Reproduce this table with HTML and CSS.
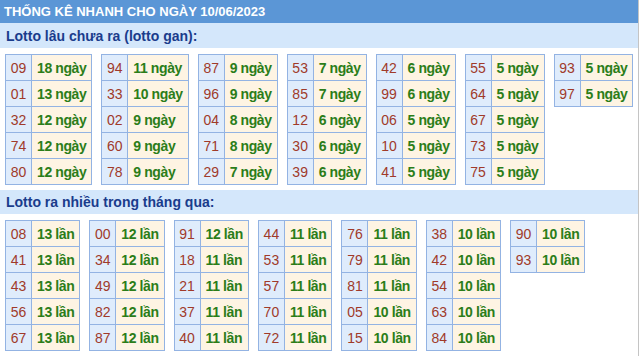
FILE: index.html
```html
<!DOCTYPE html>
<html lang="vi">
<head>
<meta charset="utf-8">
<title>Thống kê nhanh</title>
<link rel="stylesheet" href="styles.css">
</head>
<body>
<div class="box">
  <div class="head">THỐNG KÊ NHANH CHO NGÀY 10/06/2023</div>
  <div class="bar">Lotto lâu chưa ra (lotto gan):</div>
  <div class="tables">
    <table><tr><td class="n">09</td><td class="v">18 ngày</td></tr><tr><td class="n">01</td><td class="v">13 ngày</td></tr><tr><td class="n">32</td><td class="v">12 ngày</td></tr><tr><td class="n">74</td><td class="v">12 ngày</td></tr><tr><td class="n">80</td><td class="v">12 ngày</td></tr></table>
    <table><tr><td class="n">94</td><td class="v">11 ngày</td></tr><tr><td class="n">33</td><td class="v">10 ngày</td></tr><tr><td class="n">02</td><td class="v">9 ngày</td></tr><tr><td class="n">60</td><td class="v">9 ngày</td></tr><tr><td class="n">78</td><td class="v">9 ngày</td></tr></table>
    <table><tr><td class="n">87</td><td class="v">9 ngày</td></tr><tr><td class="n">96</td><td class="v">9 ngày</td></tr><tr><td class="n">04</td><td class="v">8 ngày</td></tr><tr><td class="n">71</td><td class="v">8 ngày</td></tr><tr><td class="n">29</td><td class="v">7 ngày</td></tr></table>
    <table><tr><td class="n">53</td><td class="v">7 ngày</td></tr><tr><td class="n">85</td><td class="v">7 ngày</td></tr><tr><td class="n">12</td><td class="v">6 ngày</td></tr><tr><td class="n">30</td><td class="v">6 ngày</td></tr><tr><td class="n">39</td><td class="v">6 ngày</td></tr></table>
    <table><tr><td class="n">42</td><td class="v">6 ngày</td></tr><tr><td class="n">99</td><td class="v">6 ngày</td></tr><tr><td class="n">06</td><td class="v">5 ngày</td></tr><tr><td class="n">10</td><td class="v">5 ngày</td></tr><tr><td class="n">41</td><td class="v">5 ngày</td></tr></table>
    <table><tr><td class="n">55</td><td class="v">5 ngày</td></tr><tr><td class="n">64</td><td class="v">5 ngày</td></tr><tr><td class="n">67</td><td class="v">5 ngày</td></tr><tr><td class="n">73</td><td class="v">5 ngày</td></tr><tr><td class="n">75</td><td class="v">5 ngày</td></tr></table>
    <table><tr><td class="n">93</td><td class="v">5 ngày</td></tr><tr><td class="n">97</td><td class="v">5 ngày</td></tr></table>
  </div>
  <div class="bar bar2">Lotto ra nhiều trong tháng qua:</div>
  <div class="tables">
    <table><tr><td class="n">08</td><td class="v">13 lần</td></tr><tr><td class="n">41</td><td class="v">13 lần</td></tr><tr><td class="n">43</td><td class="v">13 lần</td></tr><tr><td class="n">56</td><td class="v">13 lần</td></tr><tr><td class="n">67</td><td class="v">13 lần</td></tr></table>
    <table><tr><td class="n">00</td><td class="v">12 lần</td></tr><tr><td class="n">34</td><td class="v">12 lần</td></tr><tr><td class="n">49</td><td class="v">12 lần</td></tr><tr><td class="n">82</td><td class="v">12 lần</td></tr><tr><td class="n">87</td><td class="v">12 lần</td></tr></table>
    <table><tr><td class="n">91</td><td class="v">12 lần</td></tr><tr><td class="n">18</td><td class="v">11 lần</td></tr><tr><td class="n">21</td><td class="v">11 lần</td></tr><tr><td class="n">37</td><td class="v">11 lần</td></tr><tr><td class="n">40</td><td class="v">11 lần</td></tr></table>
    <table><tr><td class="n">44</td><td class="v">11 lần</td></tr><tr><td class="n">53</td><td class="v">11 lần</td></tr><tr><td class="n">57</td><td class="v">11 lần</td></tr><tr><td class="n">70</td><td class="v">11 lần</td></tr><tr><td class="n">72</td><td class="v">11 lần</td></tr></table>
    <table><tr><td class="n">76</td><td class="v">11 lần</td></tr><tr><td class="n">79</td><td class="v">11 lần</td></tr><tr><td class="n">81</td><td class="v">11 lần</td></tr><tr><td class="n">05</td><td class="v">10 lần</td></tr><tr><td class="n">15</td><td class="v">10 lần</td></tr></table>
    <table><tr><td class="n">38</td><td class="v">10 lần</td></tr><tr><td class="n">42</td><td class="v">10 lần</td></tr><tr><td class="n">54</td><td class="v">10 lần</td></tr><tr><td class="n">63</td><td class="v">10 lần</td></tr><tr><td class="n">84</td><td class="v">10 lần</td></tr></table>
    <table><tr><td class="n">90</td><td class="v">10 lần</td></tr><tr><td class="n">93</td><td class="v">10 lần</td></tr></table>
  </div>
</div>
</body>
</html>
```

FILE: styles.css
```css
html, body {
  margin: 0;
  padding: 0;
  background: #ffffff;
}
body {
  font-family: "Liberation Sans", Arial, sans-serif;
}
.box {
  width: 638px;
  border-right: 1px solid #c4c4c4;
  min-height: 356px;
}
.head {
  height: 23px;
  line-height: 24px;
  background: #5b96d6;
  color: #ffffff;
  font-weight: bold;
  font-size: 13px;
  padding-left: 4px;
}
.bar {
  height: 25px;
  line-height: 26px;
  background: #d4e7fb;
  color: #1a3c8c;
  font-weight: bold;
  font-size: 14px;
  padding-left: 6px;
}
.bar2 {
  height: 24px;
  line-height: 24px;
}
.tables {
  display: flex;
  flex-wrap: wrap;
  align-items: flex-start;
  gap: 9px;
  padding: 6px 0 5px 5px;
}
table {
  border-collapse: separate;
  border-spacing: 0;
  border-top: 1px solid #93b3e3;
  border-left: 1px solid #93b3e3;
}
td {
  height: 25px;
  padding: 0;
  border-right: 1px solid #93b3e3;
  border-bottom: 1px solid #93b3e3;
  white-space: nowrap;
  vertical-align: middle;
}
td.n {
  width: 17px;
  background: #dfecfc;
  color: #a03a2a;
  font-size: 14px;
  text-align: center;
  padding: 0 4px;
}
td.v {
  background: #fef4e3;
  color: #2b7d19;
  font-weight: bold;
  font-size: 14px;
  letter-spacing: -0.4px;
  padding: 0 5px;
}
```
